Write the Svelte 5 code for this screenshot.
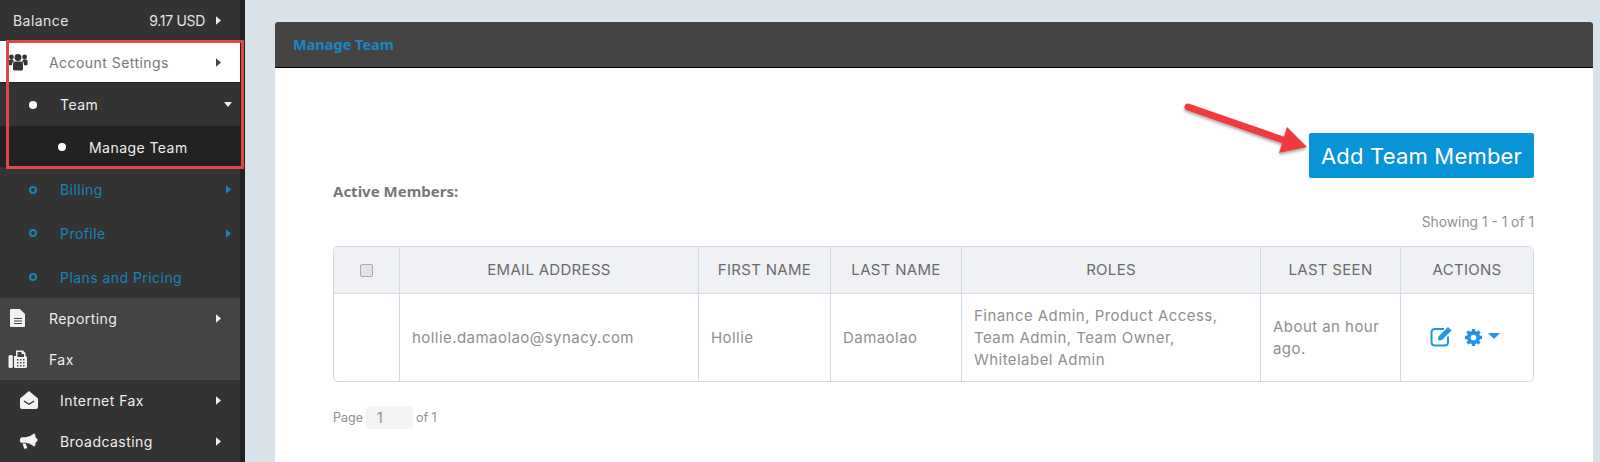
<script>
  const subItems = ['Billing', 'Profile']
  const headers = ['EMAIL ADDRESS', 'FIRST NAME', 'LAST NAME', 'ROLES', 'LAST SEEN', 'ACTIONS']
</script>

{#snippet caret(cls)}
  <svg class={cls} viewBox="0 0 6 10"><path d="M0 0 6 5 0 10z" fill="currentColor" /></svg>
{/snippet}

<div class="page">
  <nav class="sidebar">
    <div class="row balance">
      <span>Balance</span>
      <span class="amount">9.17 USD</span>
      {@render caret('caret')}
    </div>

    <div class="row top active">
      <svg class="ico" viewBox="0 0 20 20" fill="#333">
        <circle cx="10" cy="5.500" r="3.400" /><circle cx="3.400" cy="5" r="2.400" /><circle cx="16.600" cy="5" r="2.400" />
        <path d="M5 11.500Q5 9.500 7 9.500h6q2 0 2 2V17q0 1.500-1.500 1.500h-7Q5 18.500 5 17z" />
        <path d="M0.500 9q0-1.500 1.500-1.500h2.800q.4 1.200 1.200 1.700-2 .5-2 3v1H1.500Q.5 13.200.5 12zM19.500 9q0-1.500-1.500-1.500h-2.800q-.4 1.200-1.200 1.700 2 .5 2 3v1h3q.5 0 .5-1.200z" />
      </svg>
      <span>Account Settings</span>
      {@render caret('caret')}
    </div>

    <div class="row dot-row open">
      <i class="dot"></i>
      <span>Team</span>
      <svg class="caret-down" viewBox="0 0 10 6"><path d="M0 0h10L5 6z" fill="currentColor" /></svg>
    </div>
    <div class="row deep">
      <i class="dot"></i>
      <span>Manage Team</span>
    </div>

    {#each subItems as item}
      <div class="row dot-row link">
        <i class="ring"></i>
        <span>{item}</span>
        {@render caret('caret blue')}
      </div>
    {/each}
    <div class="row dot-row link">
      <i class="ring"></i>
      <span>Plans and Pricing</span>
    </div>

    <div class="row top light">
      <svg class="ico doc" viewBox="0 0 20 20" fill="#f2f2f2">
        <path fill-rule="evenodd" d="M3 1h9l5 5v12q0 1-1 1H3q-1 0-1-1V2q0-1 1-1zM6 10v1h8v-1zM6 12.500v1h8v-1zM6 15v1h8v-1z" />
      </svg>
      <span>Reporting</span>
      {@render caret('caret')}
    </div>
    <div class="row top light">
      <svg class="ico" viewBox="0 0 20 20" fill="#f2f2f2">
        <rect x="0.500" y="6" width="4.300" height="13" rx="1.500" />
        <path fill-rule="evenodd" d="M6 7h2V1.500h7l2.500 2.500V7q1.500 0 1.500 1.500V17.500q0 1.500-1.500 1.500H7.500Q6 19 6 17.500zM9.500 3v5h6.500V5h-2.500V3zM9 10v1.500h1.500V10zM12 10v1.500h1.500V10zM15 10v1.500h1.500V10zM9 13v1.500h1.500V13zM12 13v1.500h1.500V13zM15 13v1.500h1.500V13zM9 16v1.500h1.500V16zM12 16v1.500h1.500V16zM15 16v1.500h1.500V16z" />
      </svg>
      <span>Fax</span>
    </div>

    <div class="row sub">
      <svg class="ico" viewBox="0 0 20 20" fill="#f2f2f2">
        <path fill-rule="evenodd" d="M1 8.500 10 1l9 7.500V17q0 2-2 2H3q-2 0-2-2zM4.500 11.500 10 15l5.500-3.500-.7-1L10 13.500 5.200 10.500z" />
      </svg>
      <span>Internet Fax</span>
      {@render caret('caret')}
    </div>
    <div class="row sub">
      <svg class="ico" viewBox="0 0 20 20" fill="#f2f2f2">
        <path d="M15 2.500q1.500 0 1.500 3.500v.6q2 .6 2 2.400t-2 2.400v.6q0 3.500-1.500 3.500-4-3.500-8.500-3.800H2.500Q.8 11.700.8 9.500T2.500 6.300h4Q11 6 15 2.500z" />
        <path d="M3.500 12.500h3.200l1.500 4.500q-.6 1-3 .8z" />
      </svg>
      <span>Broadcasting</span>
      {@render caret('caret')}
    </div>
  </nav>

  <main class="content">
    <section class="card">
      <header class="card-head">Manage Team</header>
      <div class="card-body">
        <div class="toolbar">
          <button class="add">Add Team Member</button>
        </div>
        <h4 class="members">Active Members:</h4>
        <p class="showing">Showing 1 - 1 of 1</p>

        <div class="table">
          <div class="cell head check"><span class="box"></span></div>
          {#each headers as h}
            <div class="cell head">{h}</div>
          {/each}

          <div class="cell"></div>
          <div class="cell left">hollie.damaolao@synacy.com</div>
          <div class="cell left">Hollie</div>
          <div class="cell left">Damaolao</div>
          <div class="cell left roles">Finance Admin, Product Access, Team Admin, Team Owner, Whitelabel Admin</div>
          <div class="cell left">About an hour ago.</div>
          <div class="cell actions">
            <svg class="edit" viewBox="0 0 24 22" fill="none" stroke="#1e96ea">
              <path d="M18 11.500V17q0 3.500-3.500 3.500H5Q1.500 20.500 1.500 17V7.500Q1.500 4 5 4h9" stroke-width="2" />
              <path d="M8.500 11.500 18 2l3.500 3.500L12 15l-4 .5z" fill="#1e96ea" stroke="none" />
            </svg>
            <svg class="gear" viewBox="0 0 20 20">
              <circle cx="10" cy="10" r="5" fill="none" stroke="#1e96ea" stroke-width="4" />
              <path d="M10 1v18M1 10h18M3.600 3.600l12.800 12.800M16.400 3.600 3.600 16.400" stroke="#1e96ea" stroke-width="3.500" stroke-dasharray="4 10 4" />
            </svg>
            <svg class="gear-caret" viewBox="0 0 12 6"><path d="M0 0h12L6 6z" fill="#1e96ea" /></svg>
          </div>
        </div>

        <div class="pager">
          <span>Page</span>
          <span class="page-input">1</span>
          <span>of 1</span>
        </div>
      </div>
    </section>
  </main>

  <!-- annotations drawn on top of the screenshot -->
  <div class="callout"></div>
  <svg class="arrow" width="140" height="70" viewBox="0 0 140 70">
    <defs>
      <filter id="sh" x="-20%" y="-20%" width="140%" height="150%">
        <feDropShadow dx="0" dy="2" stdDeviation="1.500" flood-color="#000" flood-opacity="0.35" />
      </filter>
    </defs>
    <g filter="url(#sh)">
      <path d="M8 7 106 41" stroke="#ef3b3f" stroke-width="7" stroke-linecap="round" />
      <path d="M107 27 127 47 99 53z" fill="#ef3b3f" />
    </g>
  </svg>
</div>

<style>
  :global(body) {
    margin: 0;
    background: #d9e1e9;
  }
  .page {
    position: relative;
    display: flex;
    width: 1600px;
    height: 462px;
    overflow: hidden;
    font-family: Inter, "Open Sans", sans-serif;
  }

  .sidebar {
    flex: 0 0 240px;
    height: 462px;
    background: #333;
    border-right: 5px solid #232323;
    color: #eee;
    font-size: 14px;
  }
  .row {
    display: flex;
    align-items: center;
    height: 42px;
    box-sizing: border-box;
    padding-right: 19px;
    letter-spacing: 0.45px;
  }
  .row > span:first-of-type {
    flex: 1;
  }
  .balance {
    height: 41px;
    padding-left: 13px;
    color: #e4e4e4;
  }
  .amount {
    margin-right: 11px;
    letter-spacing: -0.3px;
  }
  .caret {
    width: 5px;
    height: 9px;
    color: #eee;
  }
  .caret.blue {
    color: #1583bd;
    margin-right: -10px;
  }
  .caret-down {
    width: 8px;
    height: 5px;
    margin-right: -11px;
  }
  .ico {
    flex: 0 0 20px;
    width: 20px;
    height: 20px;
    margin-right: 21px;
  }
  .top {
    padding-left: 8px;
  }
  .active {
    background: #fff;
    color: #777;
    box-shadow: inset 0 -1px 0 #222;
  }
  .active .caret {
    color: #444;
  }
  .light {
    background: #444;
    height: 41px;
  }
  .sub {
    padding-left: 19px;
    height: 41px;
  }
  .dot-row {
    padding-left: 29px;
    height: 43px;
  }
  .link {
    height: 43.67px;
    padding-top: 2px;
    color: #1583bd;
  }
  .deep {
    background: #222;
    padding-left: 58px;
    padding-top: 1px;
    height: 41px;
  }
  .dot {
    flex: 0 0 8px;
    height: 8px;
    margin-right: 23px;
    border-radius: 50%;
    background: #fff;
  }
  .ring {
    flex: 0 0 8px;
    box-sizing: border-box;
    height: 8px;
    margin-right: 23px;
    border: 2px solid #1583bd;
    border-radius: 50%;
  }

  .content {
    flex: 1;
    padding: 22px 7px 0 30px;
    min-width: 0;
  }
  .card {
    height: 440px;
    background: #fff;
    border-radius: 3px 3px 0 0;
  }
  .card-head {
    box-sizing: border-box;
    height: 46px;
    padding: 0 18px;
    background: #444;
    border-bottom: 1px solid #000;
    border-radius: 3px 3px 0 0;
    color: #1687c9;
    font: 700 14.500px/44px "Noto Sans", sans-serif;
  }
  .card-body {
    padding: 0 59px 0 58px;
  }
  .toolbar {
    display: flex;
    justify-content: flex-end;
    padding-top: 65px;
  }
  .add {
    width: 225px;
    height: 45px;
    padding: 0;
    border: 0;
    border-radius: 2px;
    background: #0a94d8;
    color: #fff;
    font: 400 22px Inter, sans-serif;
    letter-spacing: 0.2px;
  }
  .members {
    margin: 3px 0 0;
    color: #777;
    font: 700 15px/20px "Noto Sans", sans-serif;
  }
  .showing {
    margin: 11px 0 0;
    padding-bottom: 1px;
    text-align: right;
    color: #909090;
    font-size: 13.800px;
    line-height: 20px;
  }
  .table {
    display: grid;
    grid-template-columns: 65px 299px 132px 131px 299px 140px 133px;
    grid-template-rows: 47px 88px;
    margin-top: 13px;
    border: 1px solid #d3dae2;
    border-radius: 5px;
    box-sizing: border-box;
    height: 136px;
    color: #909090;
    font-size: 15px;
    line-height: 22px;
    letter-spacing: 0.45px;
  }
  .cell {
    display: flex;
    align-items: center;
    justify-content: center;
    border-left: 1px solid #d3dae2;
    padding: 0 12px;
  }
  .cell:nth-child(7n + 1) {
    border-left: 0;
  }
  .head {
    background: #f0f1f4;
    border-bottom: 1px solid #d3dae2;
    color: #6b6b6b;
    letter-spacing: 0.3px;
  }
  .roles {
    padding-right: 30px;
  }
  .left {
    justify-content: flex-start;
  }
  .check {
    border-top-left-radius: 5px;
  }
  .box {
    box-sizing: border-box;
    width: 13px;
    height: 13px;
    border: 1px solid #aaa;
    border-radius: 2px;
    background: #e4e4e4;
  }
  .actions {
    gap: 6px;
    padding: 0 4px 2px 0;
  }
  .edit {
    width: 24px;
    height: 22px;
    margin-top: -3px;
  }
  .gear {
    width: 19px;
    height: 19px;
    margin-left: 4px;
  }
  .gear-caret {
    width: 12px;
    height: 6px;
    margin-left: -1px;
    margin-top: -3px;
  }
  .pager {
    display: flex;
    align-items: center;
    gap: 3px;
    margin-top: 24px;
    color: #909090;
    font-size: 12.500px;
  }
  .page-input {
    box-sizing: border-box;
    width: 47px;
    height: 23px;
    padding-left: 11px;
    border-radius: 3px;
    background: #f4f4f4;
    font-size: 14px;
    line-height: 23px;
  }

  .callout {
    position: absolute;
    left: 6px;
    top: 40px;
    width: 238px;
    height: 129px;
    box-sizing: border-box;
    border: 3px solid #e04848;
  }
  .arrow {
    position: absolute;
    left: 1180px;
    top: 100px;
  }
</style>
